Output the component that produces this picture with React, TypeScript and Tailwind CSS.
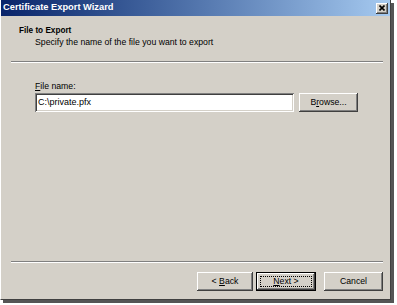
import React from 'react'

const font = { fontFamily: '"Liberation Sans", Arial, sans-serif' }

const raised =
  'shadow-[inset_-1px_-1px_0_#404040,inset_1px_1px_0_#ffffff,inset_-2px_-2px_0_#808080,inset_2px_2px_0_#d4d0c8]'

function Button({
  children,
  className = '',
  isDefault = false,
}: {
  children: React.ReactNode
  className?: string
  isDefault?: boolean
}) {
  if (isDefault) {
    return (
      <div className={`border border-black ${className}`}>
        <div className={`w-full h-full bg-[#d4d0c8] ${raised} flex items-center justify-center p-[3px]`}>
          <div className="w-full h-full border border-dotted border-black flex items-center justify-center text-[8.7px] text-black">
            {children}
          </div>
        </div>
      </div>
    )
  }
  return (
    <div
      className={`bg-[#d4d0c8] ${raised} flex items-center justify-center text-[8.7px] text-black ${className}`}
    >
      {children}
    </div>
  )
}

function Separator() {
  return <div className="ml-[10px] mr-[7px] border-t border-[#808080] border-b border-b-white" />
}

export default function App() {
  return (
    <div className="w-[397px] h-[305px] bg-white" style={font}>
      <div className="w-[391px] h-[300px] bg-[#d4d0c8] border-l border-white border-r border-r-[#404040] border-b border-b-[#404040] shadow-[3px_3px_0_#555555] flex flex-col">
        {/* Title bar */}
        <div className="h-[16px] flex items-center justify-between pl-[2px] pr-[2px] bg-gradient-to-r from-[#0a246a] to-[#a6caf0]">
          <span className="text-white font-bold text-[9.3px] leading-none">Certificate Export Wizard</span>
          <div className={`w-[12px] h-[11px] bg-[#d4d0c8] ${raised} flex items-center justify-center`}>
            <svg width="6" height="6" viewBox="0 0 6 6">
              <path d="M0.5 0.5 L5.5 5.5 M5.5 0.5 L0.5 5.5" stroke="#000" strokeWidth="1.6" />
            </svg>
          </div>
        </div>

        {/* Header */}
        <div className="pl-[18px] pt-[9px]">
          <div className="h-[12px] flex items-center font-bold text-[8.2px] text-black">File to Export</div>
          <div className="h-[12px] flex items-center pl-[16px] text-[8.7px] text-black">
            Specify the name of the file you want to export
          </div>
        </div>
        <div className="mt-[12px]">
          <Separator />
        </div>

        {/* Body */}
        <div className="pl-[34px] mt-[18px]">
          <div className="h-[11px] flex items-center text-[8.7px] text-black">
            <span>
              <u>F</u>ile name:
            </span>
          </div>
          <div className="mt-[1px] flex items-center gap-[5px]">
            <div className="w-[259px] h-[19px] bg-white shadow-[inset_1px_1px_0_#808080,inset_-1px_-1px_0_#ffffff,inset_2px_2px_0_#404040,inset_-2px_-2px_0_#d4d0c8] flex items-center pl-[3px] text-[9px] text-black">
              C:\private.pfx
            </div>
            <Button className="w-[59px] h-[19px]">
              <span>
                B<u>r</u>owse...
              </span>
            </Button>
          </div>
        </div>

        {/* Footer */}
        <div className="mt-auto">
          <Separator />
        </div>
        <div className="flex justify-end items-center pr-[7px] pt-[9px] pb-[8px]">
          <Button className="w-[56px] h-[19px]">
            <span>
              &lt; <u>B</u>ack
            </span>
          </Button>
          <Button isDefault className="w-[60px] h-[19px] ml-[3px]">
            <span>
              <u>N</u>ext &gt;
            </span>
          </Button>
          <Button className="w-[59px] h-[19px] ml-[8px]">Cancel</Button>
        </div>
      </div>
    </div>
  )
}
